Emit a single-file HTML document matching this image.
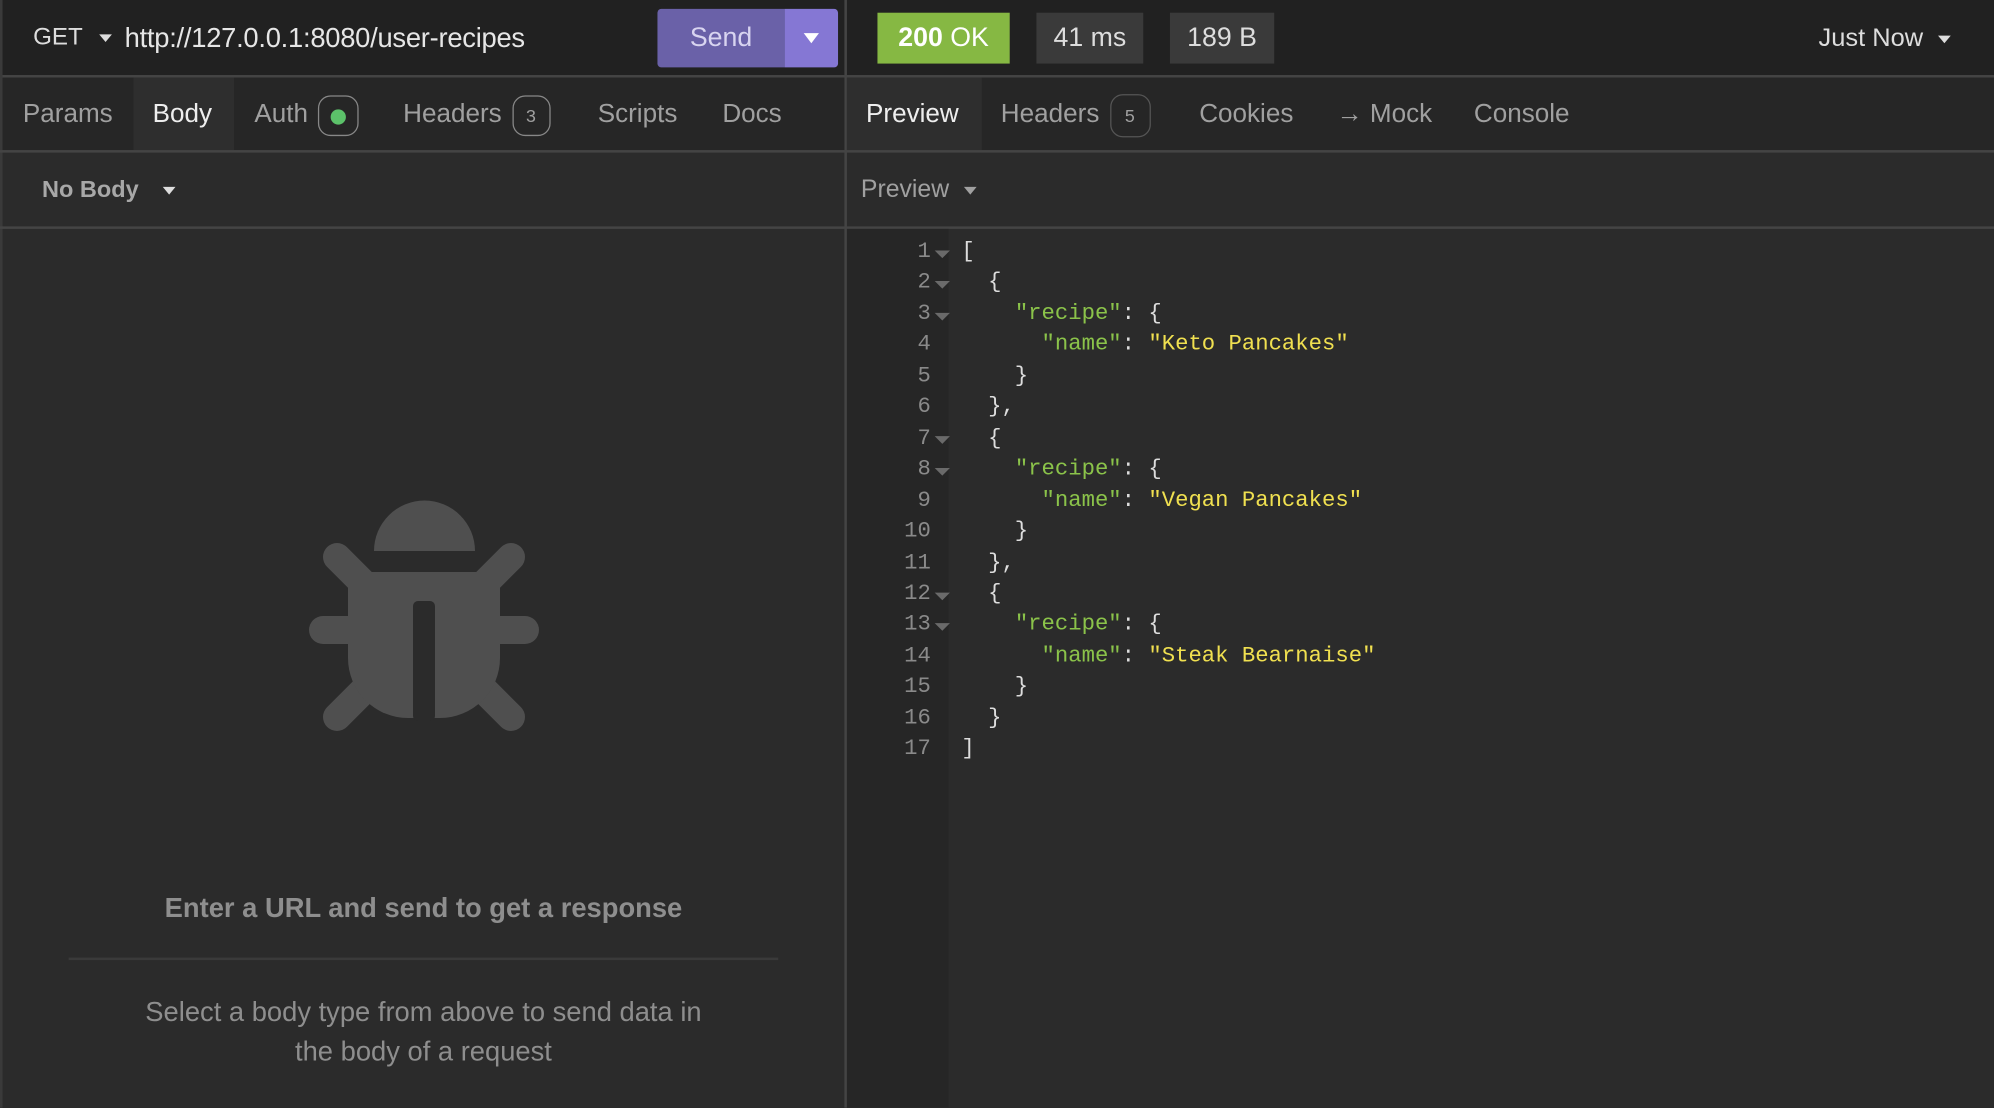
<!DOCTYPE html>
<html><head><meta charset="utf-8"><style>
html,body{margin:0;padding:0;background:#2b2b2b;width:1994px;height:1108px;overflow:hidden}
#w{position:absolute;left:0;top:0;width:1568px;height:871px;transform:scale(1.27168);transform-origin:0 0;font-family:"Liberation Sans",sans-serif;background:#2b2b2b;color:#ccc}
.a{position:absolute}
.tri{display:inline-block;width:0;height:0;border-left:5px solid transparent;border-right:5px solid transparent;border-top:6px solid currentColor;vertical-align:middle}
.tab{position:absolute;top:61px;height:58px;line-height:58px;font-size:20.5px;color:#a0a0a0}
.badge{display:inline-block;border:1.5px solid #888;border-radius:8px;width:26px;height:28px;line-height:28px;text-align:center;font-size:14px;vertical-align:middle;margin-left:8px;box-sizing:border-box}
.code{position:absolute;left:756px;top:186px;font-family:"Liberation Mono",monospace;font-size:17.5px;line-height:24.45px;color:#ddd;white-space:pre}
.ln{position:absolute;left:690px;top:186px;width:42px;text-align:right;font-family:"Liberation Mono",monospace;font-size:17.5px;line-height:24.45px;color:#8a8a8a}
.k{color:#8bc34a}.s{color:#f0e050}
.f{position:absolute;left:735px;width:0;height:0;border-left:6px solid transparent;border-right:6px solid transparent;border-top:6px solid #6a6a6a}
</style></head><body>
<div id="w">
<div class="a" style="left:0;top:0;width:1568px;height:59px;background:#212121"></div>
<div class="a" style="left:0;top:59px;width:1568px;height:2px;background:#444"></div>
<div class="a" style="left:664px;top:0;width:2px;height:871px;background:#444"></div>
<div class="a" style="left:0;top:0;width:2px;height:871px;background:#3a3a3a"></div>
<div class="a" style="left:26px;top:19px;font-size:19px;color:#ddd">GET <span class="tri" style="margin-left:8px;color:#ddd"></span></div>
<div class="a" style="left:98px;top:18px;font-size:21.5px;color:#e6e6e6;letter-spacing:-0.2px">http://127.0.0.1:8080/user-recipes</div>
<div class="a" style="left:517px;top:7px;width:100px;height:46px;background:#6a61a8;border-radius:3px 0 0 3px;color:#d8d4f0;font-size:21px;line-height:46px;text-align:center">Send</div>
<div class="a" style="left:617px;top:7px;width:42px;height:46px;background:#8577d4;border-radius:0 3px 3px 0;color:#fff;text-align:center;line-height:46px"><span class="tri" style="border-left-width:6px;border-right-width:6px;border-top-width:8px"></span></div>
<div class="a" style="left:690px;top:10px;width:104px;height:40px;background:#86b843;color:#fff;font-size:21px;line-height:40px;text-align:center"><b>200</b> OK</div>
<div class="a" style="left:815px;top:10px;width:84px;height:40px;background:#3a3a3a;color:#ddd;font-size:21px;line-height:40px;text-align:center">41 ms</div>
<div class="a" style="left:920px;top:10px;width:82px;height:40px;background:#3a3a3a;color:#ddd;font-size:21px;line-height:40px;text-align:center">189 B</div>
<div class="a" style="left:1430px;top:19px;font-size:20px;color:#ddd">Just Now <span class="tri" style="margin-left:6px"></span></div>
<div class="a" style="left:2px;top:61px;width:662px;height:57px;background:#262626"></div>
<div class="a" style="left:666px;top:61px;width:902px;height:57px;background:#262626"></div>
<div class="a" style="left:105px;top:61px;width:79px;height:57px;background:#2e2e2e"></div>
<div class="a" style="left:666px;top:61px;width:106px;height:57px;background:#2e2e2e"></div>
<div class="a" style="left:0;top:118px;width:1568px;height:2px;background:#444"></div>
<div class="tab" style="left:18px">Params</div>
<div class="tab" style="left:120px;color:#eee">Body</div>
<div class="tab" style="left:200px">Auth<span class="badge" style="width:32px;height:32px;border-radius:10px;line-height:30px"><span style="display:inline-block;width:12px;height:12px;border-radius:50%;background:#5cc26a;vertical-align:middle"></span></span></div>
<div class="tab" style="left:317px">Headers<span class="badge" style="width:30px;height:32px;line-height:30px;border-radius:10px">3</span></div>
<div class="tab" style="left:470px">Scripts</div>
<div class="tab" style="left:568px">Docs</div>
<div class="tab" style="left:681px;color:#eee">Preview</div>
<div class="tab" style="left:787px">Headers<span class="badge" style="width:32px;height:34px;line-height:32px;border-radius:10px;border-color:#555">5</span></div>
<div class="tab" style="left:943px">Cookies</div>
<div class="tab" style="left:1051px">→ Mock</div>
<div class="tab" style="left:1159px">Console</div>
<div class="a" style="left:0;top:178px;width:1568px;height:2px;background:#444"></div>
<div class="a" style="left:33px;top:138px;font-size:18.5px;font-weight:bold;color:#a8a8a8">No Body <span class="tri" style="margin-left:14px;color:#ddd"></span></div>
<div class="a" style="left:677px;top:138px;font-size:19.5px;color:#a0a0a0">Preview <span class="tri" style="margin-left:6px"></span></div>
<div class="a" style="left:666px;top:180px;width:80px;height:691px;background:#262626"></div>
<div class="ln">1<br>2<br>3<br>4<br>5<br>6<br>7<br>8<br>9<br>10<br>11<br>12<br>13<br>14<br>15<br>16<br>17</div>
<div class="f" style="top:197px"></div><div class="f" style="top:221px"></div><div class="f" style="top:246px"></div>
<div class="f" style="top:343px"></div><div class="f" style="top:368px"></div>
<div class="f" style="top:466px"></div><div class="f" style="top:490px"></div>
<div class="code">[
  {
    <span class="k">"recipe"</span>: {
      <span class="k">"name"</span>: <span class="s">"Keto Pancakes"</span>
    }
  },
  {
    <span class="k">"recipe"</span>: {
      <span class="k">"name"</span>: <span class="s">"Vegan Pancakes"</span>
    }
  },
  {
    <span class="k">"recipe"</span>: {
      <span class="k">"name"</span>: <span class="s">"Steak Bearnaise"</span>
    }
  }
]</div>
<div class="a" style="left:2px;top:702px;width:662px;text-align:center;font-size:21.5px;font-weight:bold;color:#8e8e8e">Enter a URL and send to get a response</div>
<div class="a" style="left:54px;top:753px;width:558px;height:2px;background:#3a3a3a"></div>
<div class="a" style="left:2px;top:781px;width:662px;text-align:center;font-size:21.5px;line-height:31px;color:#8e8e8e">Select a body type from above to send data in<br>the body of a request</div>
</div>
<svg class="a" style="position:absolute;left:0;top:0" width="1994" height="1108">
<g fill="#4f4f4f" stroke="#4f4f4f" stroke-linecap="round">
<path d="M374 551 A50 50 0 0 1 475 551 Z" stroke="none"/>
<line x1="337" y1="557" x2="392" y2="612" stroke-width="28"/>
<line x1="511" y1="557" x2="456" y2="612" stroke-width="28"/>
<line x1="337" y1="717" x2="392" y2="662" stroke-width="28"/>
<line x1="511" y1="717" x2="456" y2="662" stroke-width="28"/>
<line x1="323" y1="630" x2="525" y2="630" stroke-width="28"/>
<path d="M348 572 H500 V658 A60 60 0 0 1 440 718 H408 A60 60 0 0 1 348 658 Z" stroke="none"/>
</g>
<rect x="413" y="601" width="22" height="120" rx="5" fill="#2b2b2b"/>
</svg>
</body></html>
